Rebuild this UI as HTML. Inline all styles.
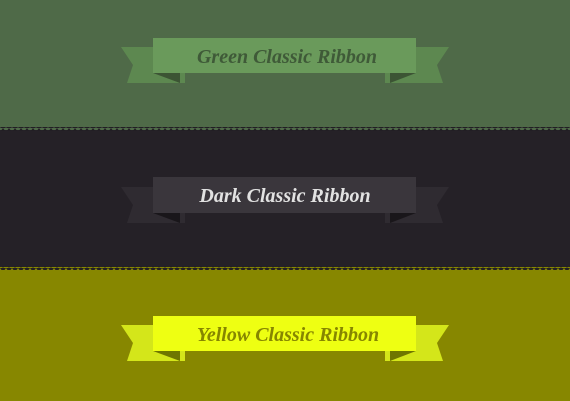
<!DOCTYPE html><html><head><style>html,body{margin:0;padding:0;width:570px;height:401px;overflow:hidden}svg{display:block}</style></head><body>
<svg width="570" height="401" viewBox="0 0 570 401" xmlns="http://www.w3.org/2000/svg">
<defs>
<pattern id="zz" width="6" height="4" patternUnits="userSpaceOnUse"><path d="M0 4 L3 0 L6 4Z" fill="#221e24"/></pattern>
<pattern id="zy" width="6" height="4" patternUnits="userSpaceOnUse"><path d="M0 0 L3 4 L6 0Z" fill="#221e24"/></pattern>
</defs>
<rect x="0" y="0" width="570" height="132" fill="#4f6a48"/>
<rect x="0" y="130" width="570" height="137" fill="#252127"/>
<rect x="0" y="127" width="570" height="4" fill="url(#zz)"/>
<rect x="0" y="267" width="570" height="134" fill="#878700"/>
<rect x="0" y="266" width="570" height="4" fill="url(#zy)"/>
<g font-family="'Liberation Serif',serif" font-style="italic" font-weight="bold" font-size="20" text-anchor="middle">
<!-- green -->
<polygon points="121,47 185,47 185,83 127,83 133,65" fill="#5d8850"/>
<polygon points="449,47 385,47 385,83 443,83 437,65" fill="#5d8850"/>
<polygon points="153,73 180,73 180,83" fill="#3c5434"/>
<polygon points="416,73 390,73 390,83" fill="#3c5434"/>
<rect x="153" y="38" width="263" height="35" fill="#6a9a5b"/>
<text x="287" y="63" fill="#3f5a38">Green Classic Ribbon</text>
<!-- dark -->
<polygon points="121,187 185,187 185,223 127,223 133,205" fill="#2f2b31"/>
<polygon points="449,187 385,187 385,223 443,223 437,205" fill="#2f2b31"/>
<polygon points="153,213 180,213 180,223" fill="#19161a"/>
<polygon points="416,213 390,213 390,223" fill="#19161a"/>
<rect x="153" y="177" width="263" height="36" fill="#3a363c"/>
<text x="285" y="202" fill="#e2e2e2">Dark Classic Ribbon</text>
<!-- yellow -->
<polygon points="121,325 185,325 185,361 127,361 133,343" fill="#d4e61a"/>
<polygon points="449,325 385,325 385,361 443,361 437,343" fill="#d4e61a"/>
<polygon points="153,351 180,351 180,361" fill="#6f7600"/>
<polygon points="416,351 390,351 390,361" fill="#6f7600"/>
<rect x="153" y="316" width="263" height="35" fill="#eeff12"/>
<text x="288" y="341" fill="#868600">Yellow Classic Ribbon</text>
</g>
</svg>
</body></html>
